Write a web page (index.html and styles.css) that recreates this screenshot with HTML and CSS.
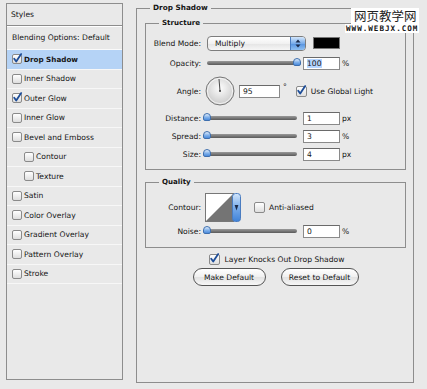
FILE: index.html
```html
<!DOCTYPE html>
<html lang="en">
<head>
    <meta charset="UTF-8">
    <title>Layer Style - Drop Shadow</title>
    <link rel="stylesheet" href="styles.css">
</head>
<body>
    <svg class="defs" width="0" height="0">
        <defs>
            <radialGradient id="dial-fill" cx="50%" cy="40%" r="65%">
                <stop offset="0" stop-color="#fdfdfd"/>
                <stop offset="1" stop-color="#c4c4c4"/>
            </radialGradient>
            <linearGradient id="blue-fill" x1="0" y1="0" x2="0" y2="1">
                <stop offset="0" stop-color="#d3e6fb"/>
                <stop offset="0.5" stop-color="#79acea"/>
                <stop offset="1" stop-color="#3f82d8"/>
            </linearGradient>
        </defs>
    </svg>

    <div class="dialog">
        <div class="styles-panel">
            <div class="panel-head">Styles</div>
            <div class="panel-blend">Blending Options: Default</div>
            <ul class="fx-list">
                <li class="fx selected"><span class="cb on"><svg viewBox="0 0 12 12"><path d="M2.4 6.2 L4.6 9.2 L10 1.2"/></svg></span>Drop Shadow</li>
                <li class="fx"><span class="cb"></span>Inner Shadow</li>
                <li class="fx"><span class="cb on"><svg viewBox="0 0 12 12"><path d="M2.4 6.2 L4.6 9.2 L10 1.2"/></svg></span>Outer Glow</li>
                <li class="fx"><span class="cb"></span>Inner Glow</li>
                <li class="fx"><span class="cb"></span>Bevel and Emboss</li>
                <li class="fx indent"><span class="cb"></span>Contour</li>
                <li class="fx indent"><span class="cb"></span>Texture</li>
                <li class="fx"><span class="cb"></span>Satin</li>
                <li class="fx"><span class="cb"></span>Color Overlay</li>
                <li class="fx"><span class="cb"></span>Gradient Overlay</li>
                <li class="fx"><span class="cb"></span>Pattern Overlay</li>
                <li class="fx"><span class="cb"></span>Stroke</li>
            </ul>
        </div>

        <fieldset class="group main">
            <legend>Drop Shadow</legend>

            <fieldset class="group sub structure">
                <legend>Structure</legend>

                <div class="row row-blend">
                    <span class="lbl">Blend Mode:</span>
                    <div class="select">
                        <span class="select-text">Multiply</span>
                        <span class="stepper">
                            <svg width="6" height="9" viewBox="0 0 6 9"><path d="M3 0.5 L5.5 3.5 L0.5 3.5 Z M0.5 5.5 L5.5 5.5 L3 8.5 Z" fill="#1b2b4a"/></svg>
                        </span>
                    </div>
                    <span class="swatch"></span>
                </div>

                <div class="row row-opacity">
                    <span class="lbl">Opacity:</span>
                    <div class="slider"><span class="knob at-end"></span></div>
                    <span class="num"><span class="sel">100</span></span>
                    <span class="unit">%</span>
                </div>

                <div class="row row-angle">
                    <span class="lbl">Angle:</span>
                    <svg class="dial" width="30" height="30" viewBox="0 0 30 30">
                        <circle cx="15" cy="15" r="14" fill="url(#dial-fill)" stroke="#777"/>
                        <circle cx="15" cy="15" r="12.6" fill="none" stroke="#fff" stroke-opacity="0.7"/>
                        <line x1="15" y1="15" x2="14" y2="3" stroke="#4a4a4a"/>
                        <circle cx="15" cy="15" r="1" fill="#3a3a3a"/>
                    </svg>
                    <span class="num num-angle">95</span>
                    <span class="deg">°</span>
                    <span class="cb on big"><svg viewBox="0 0 12 12"><path d="M2.4 6.2 L4.6 9.2 L10 1.2"/></svg></span>
                    <span class="cb-label">Use Global Light</span>
                </div>

                <div class="row row-small">
                    <span class="lbl">Distance:</span>
                    <div class="slider"><span class="knob"></span></div>
                    <span class="num">1</span>
                    <span class="unit">px</span>
                </div>

                <div class="row row-small">
                    <span class="lbl">Spread:</span>
                    <div class="slider"><span class="knob"></span></div>
                    <span class="num">3</span>
                    <span class="unit">%</span>
                </div>

                <div class="row row-small">
                    <span class="lbl">Size:</span>
                    <div class="slider"><span class="knob"></span></div>
                    <span class="num">4</span>
                    <span class="unit">px</span>
                </div>
            </fieldset>

            <fieldset class="group sub quality">
                <legend>Quality</legend>

                <div class="row row-contour">
                    <span class="lbl">Contour:</span>
                    <svg class="contour" width="36" height="29" viewBox="0 0 36 29">
                        <rect x="0.5" y="0.5" width="28" height="28" fill="#fff" stroke="#777"/>
                        <polygon points="1,28 28,1 28,28" fill="#747474"/>
                        <rect x="27.5" y="0.5" width="8" height="28" rx="3" fill="url(#blue-fill)" stroke="#4a7cc0"/>
                        <path d="M29.6 12 L33.4 12 L31.5 17.5 Z" fill="#1b2b4a"/>
                    </svg>
                    <span class="cb anti"></span>
                    <span class="cb-label">Anti-aliased</span>
                </div>

                <div class="row row-noise">
                    <span class="lbl">Noise:</span>
                    <div class="slider"><span class="knob"></span></div>
                    <span class="num">0</span>
                    <span class="unit">%</span>
                </div>
            </fieldset>

            <div class="knockout">
                <span class="cb on big"><svg viewBox="0 0 12 12"><path d="M2.4 6.2 L4.6 9.2 L10 1.2"/></svg></span>
                <span>Layer Knocks Out Drop Shadow</span>
            </div>

            <div class="buttons">
                <button type="button" class="btn btn-make">Make Default</button>
                <button type="button" class="btn btn-reset">Reset to Default</button>
            </div>
        </fieldset>
    </div>

    <div class="watermark">
        <span class="wm-cn">网页教学网</span>
        <span class="wm-en">WWW.WEBJX.COM</span>
    </div>
</body>
</html>
```

FILE: styles.css
```css
:root {
    --bg: #e9e9e9;
    --line: #8d8d8d;
    --select-blue: #b5d3f6;
    --text: #151515;
}

body {
    margin: 0;
    background-color: var(--bg);
    font-family: "DejaVu Sans", sans-serif;
    font-size: 7.6px;
    color: var(--text);
}

.defs {
    position: absolute;
}

.dialog {
    display: flex;
    align-items: flex-start;
    padding: 3px 0 0 6px;
}

/* left list */
.styles-panel {
    width: 117px;
    height: 377px;
    box-sizing: border-box;
    border: 1px solid var(--line);
    flex: none;
}

.panel-head {
    height: 21px;
    line-height: 22px;
    padding-left: 4px;
    border-bottom: 1px solid var(--line);
}

.panel-blend {
    height: 22px;
    line-height: 22px;
    padding-left: 5px;
    border-top: 1px solid #fff;
    border-bottom: 1px solid #fafafa;
}

.fx-list {
    list-style: none;
    margin: 0;
    padding: 0;
}

.fx {
    height: 18.5px;
    display: flex;
    align-items: center;
    gap: 2px;
    padding-left: 5px;
    border-bottom: 1px solid #f7f7f7;
}

.fx.indent {
    padding-left: 17px;
}

.fx.selected {
    background-color: var(--select-blue);
    font-weight: bold;
    font-size: 7.2px;
}

/* checkboxes */
.cb {
    width: 8px;
    height: 8px;
    flex: none;
    position: relative;
    border: 1px solid #8a8a8a;
    border-radius: 2px;
    background: linear-gradient(#ffffff, #dedede);
}

.cb.big {
    width: 9px;
    height: 9px;
}

.cb svg {
    position: absolute;
    left: -1px;
    top: -2px;
    width: 11px;
    height: 11px;
    overflow: visible;
}

.cb svg path {
    fill: none;
    stroke: #1d4d98;
    stroke-width: 2;
    stroke-linecap: round;
    stroke-linejoin: round;
}

/* group boxes */
.group {
    margin: 0;
    border: 1px solid var(--line);
    min-width: 0;
}

legend {
    padding: 0 3px;
    line-height: 10px;
    font-weight: bold;
    font-size: 7.3px;
}

.main {
    width: 278px;
    height: 380px;
    box-sizing: border-box;
    margin-left: 13px;
    padding: 5px 7px 0 8px;
}

.main > legend {
    margin-left: 5px;
}

.sub > legend {
    margin-left: 13px;
    font-size: 7.1px;
}

.structure {
    padding: 5px 0 6px;
}

.quality {
    margin-top: 7px;
    padding: 4px 0 8px;
}

/* rows */
.row {
    display: flex;
    align-items: center;
}

.lbl {
    width: 55px;
    margin-right: 6px;
    text-align: right;
    flex: none;
}

.row-blend,
.row-opacity {
    height: 20px;
}

.row-angle {
    height: 36px;
}

.row-small {
    height: 18px;
}

.row-contour {
    height: 32px;
}

.row-noise {
    height: 16px;
}

.select {
    width: 99px;
    height: 15px;
    box-sizing: border-box;
    display: flex;
    align-items: center;
    border: 1px solid #7d7d7d;
    border-radius: 4px;
    background: linear-gradient(#ffffff, #f1f1f1 50%, #e4e4e4 51%, #f6f6f6);
    overflow: hidden;
}

.select-text {
    flex: 1;
    padding-left: 7px;
}

.stepper {
    width: 14px;
    height: 100%;
    display: flex;
    align-items: center;
    justify-content: center;
    border-left: 1px solid #4a7cc0;
    background: linear-gradient(#d3e6fb, #79acea 50%, #5592e0 51%, #8fc0f2);
}

.swatch {
    width: 27px;
    height: 12px;
    box-sizing: border-box;
    margin-left: 7px;
    background-color: #000;
    border: 1px solid #777;
}

.slider {
    position: relative;
    width: 90px;
    height: 4px;
    flex: none;
    border-radius: 2px;
    background: linear-gradient(#9a9a9a, #5a5a5a);
}

.knob {
    position: absolute;
    left: -4px;
    top: -3px;
    width: 8px;
    height: 8px;
    box-sizing: border-box;
    border: 1px solid #3e6fae;
    border-radius: 4px 4px 2px 2px;
    background: linear-gradient(#e2eefc, #7fb0ea 55%, #4b8bdc);
}

.knob.at-end {
    left: auto;
    right: -4px;
}

.num {
    width: 37px;
    height: 13px;
    box-sizing: border-box;
    margin-left: 6px;
    padding-left: 3px;
    line-height: 11px;
    background-color: #fff;
    border: 1px solid #8a8a8a;
    border-top-color: #6a6a6a;
    flex: none;
}

.sel {
    background-color: #b5d5ff;
}

.unit {
    margin-left: 2px;
}

.dial {
    margin-left: -2px;
    flex: none;
}

.num-angle {
    width: 41px;
    margin-left: 4px;
}

.deg {
    align-self: flex-start;
    margin: 9px 0 0 3px;
}

.row-angle .cb {
    margin-left: 9px;
}

.cb-label {
    margin-left: 4px;
}

.contour {
    margin-left: -2px;
    flex: none;
}

.cb.anti {
    margin-left: 13px;
    width: 9px;
    height: 9px;
}

.knockout {
    height: 14px;
    margin-top: 4px;
    display: flex;
    align-items: center;
    justify-content: center;
    gap: 5px;
    padding-left: 2px;
}

.buttons {
    margin-top: 2px;
    display: flex;
    justify-content: center;
    gap: 15px;
}

.btn {
    height: 18px;
    padding: 0;
    border: 1px solid #555;
    border-radius: 9px;
    font-family: "DejaVu Sans", sans-serif;
    font-size: 7.6px;
    color: var(--text);
    background: linear-gradient(#ffffff, #f0f0f0 50%, #e2e2e2 51%, #f7f7f7);
}

.btn-make {
    width: 73px;
}

.btn-reset {
    width: 78px;
}

/* site watermark laid over the dialog */
.watermark {
    position: absolute;
    top: 8px;
    left: 345px;
    display: flex;
    flex-direction: column;
    align-items: flex-end;
}

.wm-cn {
    background-color: #fff;
    padding: 0 3px;
    font-family: "Noto Sans CJK SC", sans-serif;
    font-size: 12.5px;
    line-height: 16px;
    color: #222;
}

.wm-en {
    background-color: #fff;
    padding: 0 1px;
    font-family: "DejaVu Sans Mono", monospace;
    font-weight: bold;
    font-size: 7.6px;
    line-height: 9px;
    letter-spacing: 1px;
    color: #111;
}
```
